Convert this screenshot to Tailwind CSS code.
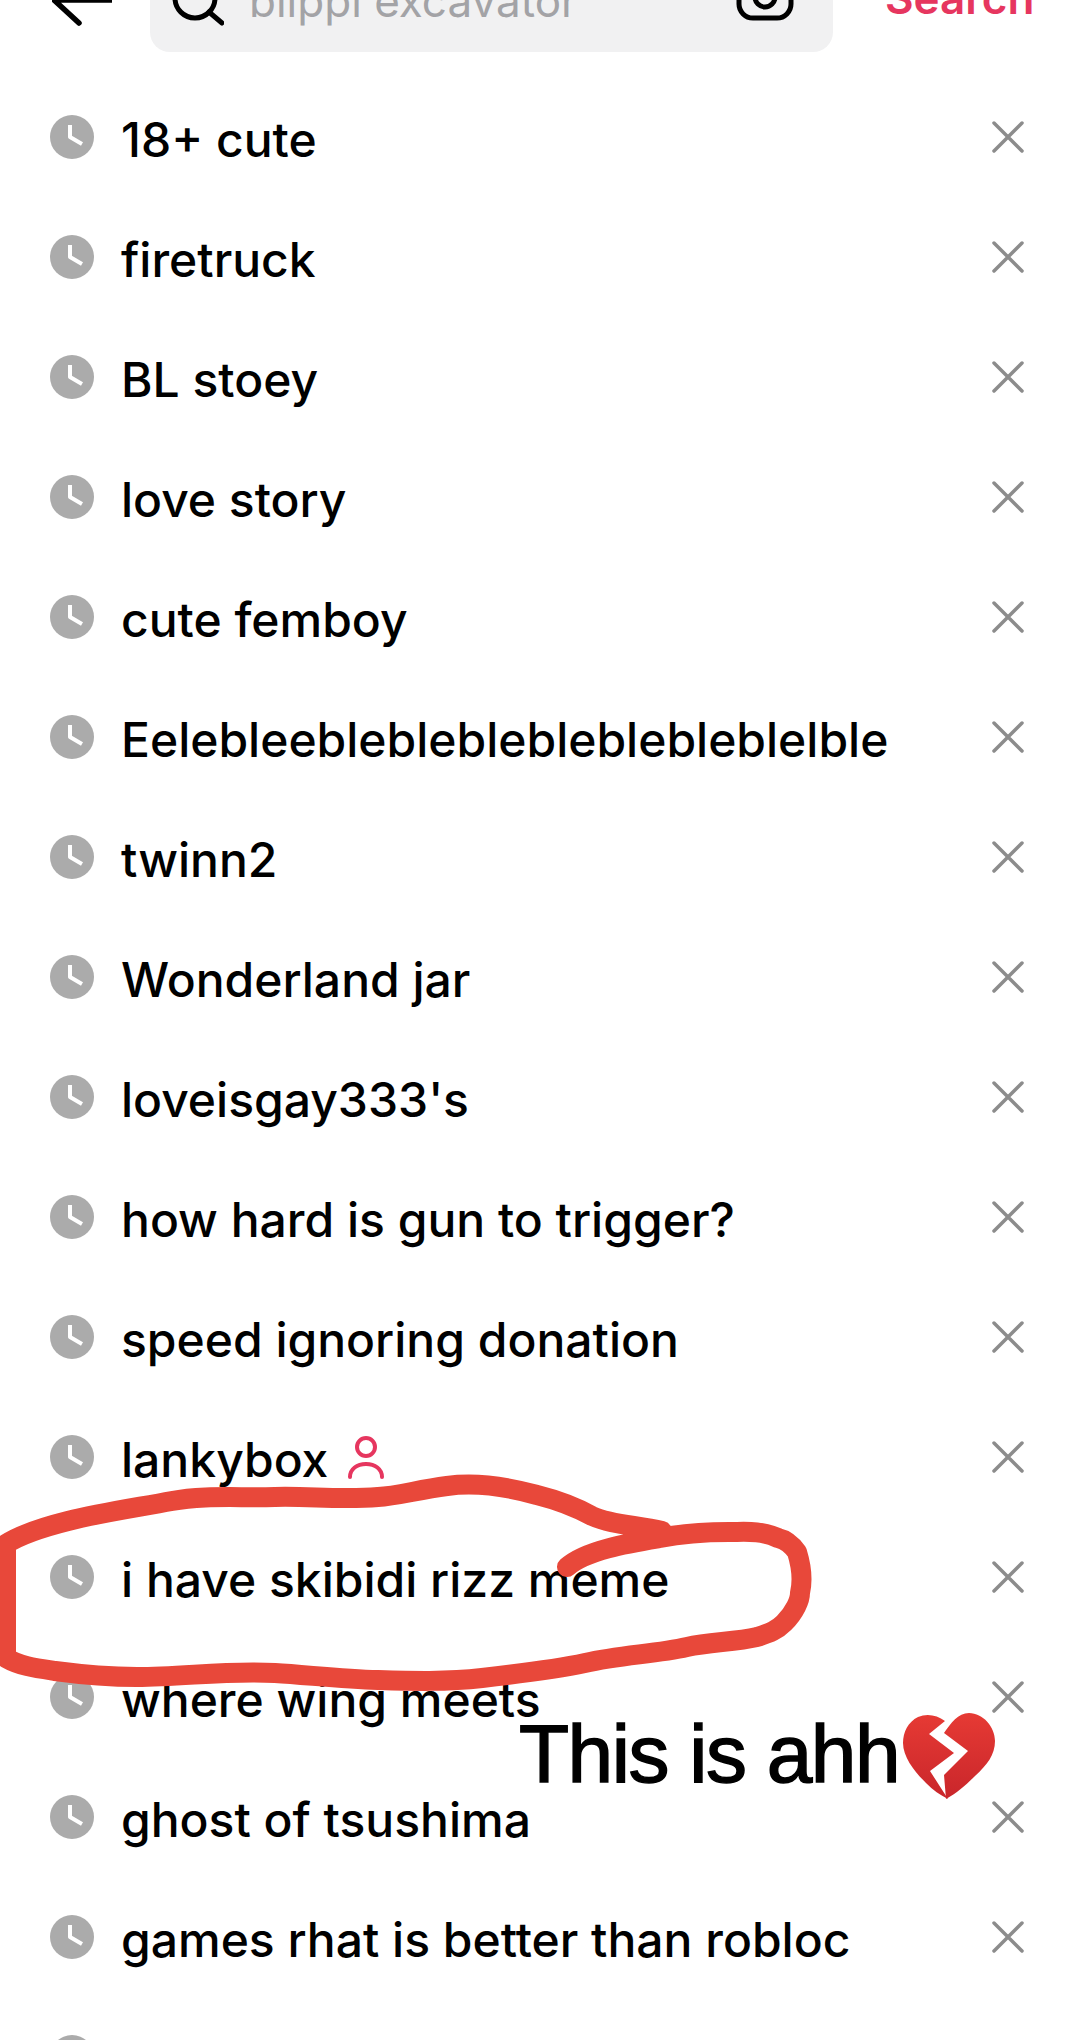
<!DOCTYPE html>
<html lang="en">
<head>
    <meta charset="UTF-8">
    <meta name="viewport" content="width=device-width, initial-scale=1.0">
    <title>Search history</title>
    <script src="https://cdn.jsdelivr.net/npm/@tailwindcss/browser@4"></script>
</head>
<body class="bg-white">
<div class="relative w-[1080px] h-[2040px] overflow-hidden bg-white font-['Inter',sans-serif]">

    <!-- header, cut off by the top of the screenshot -->
    <div class="flex items-center h-[92px] -mt-[40px] mb-[25px]">
        <svg class="ml-[52px] w-[60px] h-[60px] shrink-0" viewBox="0 0 60 60" fill="none" stroke="#000" stroke-width="5.5" stroke-linecap="round" stroke-linejoin="round">
            <path d="M60 24H2M27 -1L2 24 27 47"/>
        </svg>
        <div class="ml-[38px] w-[683px] h-[92px] shrink-0 rounded-[20px] bg-[#f1f1f2] flex items-center">
            <svg class="ml-[22px] w-[52px] h-[60px] shrink-0" viewBox="0 0 52 60" fill="none" stroke="#000" stroke-width="5" stroke-linecap="round">
                <circle cx="23" cy="22" r="20"/>
                <path d="M37 36L50 47"/>
            </svg>
            <span class="ml-[25px] mb-[10px] text-[44px] leading-none text-[#a3a3a6] w-[340px] whitespace-nowrap">blippi excavator</span>
            <svg class="ml-[147px] w-[58px] h-[58px] shrink-0" viewBox="0 0 58 58" fill="none" stroke="#000" stroke-width="5">
                <rect x="3" y="-8" width="52" height="49" rx="14"/>
                <circle cx="29" cy="20" r="10"/>
            </svg>
        </div>
        <span class="ml-[52px] mb-[16px] text-[44px] leading-none font-semibold text-[#e6365f] whitespace-nowrap">Search</span>
    </div>

    <!-- history rows -->
    <ul class="text-[48px] font-medium text-black">
        <li class="flex items-center h-[120px]"><svg class="ml-[50px] w-[44px] h-[44px]" viewBox="0 0 44 44"><circle cx="22" cy="22" r="22" fill="#ababab"/><path d="M20 10V22L32 29" fill="none" stroke="#fff" stroke-width="4" stroke-linejoin="round"/></svg><span class="ml-[27px] pt-[5px] flex-1 whitespace-nowrap">18+ cute</span><svg class="mr-[56px] w-[32px] h-[32px]" viewBox="0 0 32 32" stroke="#8c8c8c" stroke-width="3.5" stroke-linecap="round"><path d="M2 2L30 30M30 2L2 30"/></svg></li>
        <li class="flex items-center h-[120px]"><svg class="ml-[50px] w-[44px] h-[44px]" viewBox="0 0 44 44"><circle cx="22" cy="22" r="22" fill="#ababab"/><path d="M20 10V22L32 29" fill="none" stroke="#fff" stroke-width="4" stroke-linejoin="round"/></svg><span class="ml-[27px] pt-[5px] flex-1 whitespace-nowrap">firetruck</span><svg class="mr-[56px] w-[32px] h-[32px]" viewBox="0 0 32 32" stroke="#8c8c8c" stroke-width="3.5" stroke-linecap="round"><path d="M2 2L30 30M30 2L2 30"/></svg></li>
        <li class="flex items-center h-[120px]"><svg class="ml-[50px] w-[44px] h-[44px]" viewBox="0 0 44 44"><circle cx="22" cy="22" r="22" fill="#ababab"/><path d="M20 10V22L32 29" fill="none" stroke="#fff" stroke-width="4" stroke-linejoin="round"/></svg><span class="ml-[27px] pt-[5px] flex-1 whitespace-nowrap">BL stoey</span><svg class="mr-[56px] w-[32px] h-[32px]" viewBox="0 0 32 32" stroke="#8c8c8c" stroke-width="3.5" stroke-linecap="round"><path d="M2 2L30 30M30 2L2 30"/></svg></li>
        <li class="flex items-center h-[120px]"><svg class="ml-[50px] w-[44px] h-[44px]" viewBox="0 0 44 44"><circle cx="22" cy="22" r="22" fill="#ababab"/><path d="M20 10V22L32 29" fill="none" stroke="#fff" stroke-width="4" stroke-linejoin="round"/></svg><span class="ml-[27px] pt-[5px] flex-1 whitespace-nowrap">love story</span><svg class="mr-[56px] w-[32px] h-[32px]" viewBox="0 0 32 32" stroke="#8c8c8c" stroke-width="3.5" stroke-linecap="round"><path d="M2 2L30 30M30 2L2 30"/></svg></li>
        <li class="flex items-center h-[120px]"><svg class="ml-[50px] w-[44px] h-[44px]" viewBox="0 0 44 44"><circle cx="22" cy="22" r="22" fill="#ababab"/><path d="M20 10V22L32 29" fill="none" stroke="#fff" stroke-width="4" stroke-linejoin="round"/></svg><span class="ml-[27px] pt-[5px] flex-1 whitespace-nowrap">cute femboy</span><svg class="mr-[56px] w-[32px] h-[32px]" viewBox="0 0 32 32" stroke="#8c8c8c" stroke-width="3.5" stroke-linecap="round"><path d="M2 2L30 30M30 2L2 30"/></svg></li>
        <li class="flex items-center h-[120px]"><svg class="ml-[50px] w-[44px] h-[44px]" viewBox="0 0 44 44"><circle cx="22" cy="22" r="22" fill="#ababab"/><path d="M20 10V22L32 29" fill="none" stroke="#fff" stroke-width="4" stroke-linejoin="round"/></svg><span class="ml-[27px] pt-[5px] flex-1 whitespace-nowrap">Eelebleeblebleblebleblebleblelble</span><svg class="mr-[56px] w-[32px] h-[32px]" viewBox="0 0 32 32" stroke="#8c8c8c" stroke-width="3.5" stroke-linecap="round"><path d="M2 2L30 30M30 2L2 30"/></svg></li>
        <li class="flex items-center h-[120px]"><svg class="ml-[50px] w-[44px] h-[44px]" viewBox="0 0 44 44"><circle cx="22" cy="22" r="22" fill="#ababab"/><path d="M20 10V22L32 29" fill="none" stroke="#fff" stroke-width="4" stroke-linejoin="round"/></svg><span class="ml-[27px] pt-[5px] flex-1 whitespace-nowrap">twinn2</span><svg class="mr-[56px] w-[32px] h-[32px]" viewBox="0 0 32 32" stroke="#8c8c8c" stroke-width="3.5" stroke-linecap="round"><path d="M2 2L30 30M30 2L2 30"/></svg></li>
        <li class="flex items-center h-[120px]"><svg class="ml-[50px] w-[44px] h-[44px]" viewBox="0 0 44 44"><circle cx="22" cy="22" r="22" fill="#ababab"/><path d="M20 10V22L32 29" fill="none" stroke="#fff" stroke-width="4" stroke-linejoin="round"/></svg><span class="ml-[27px] pt-[5px] flex-1 whitespace-nowrap">Wonderland jar</span><svg class="mr-[56px] w-[32px] h-[32px]" viewBox="0 0 32 32" stroke="#8c8c8c" stroke-width="3.5" stroke-linecap="round"><path d="M2 2L30 30M30 2L2 30"/></svg></li>
        <li class="flex items-center h-[120px]"><svg class="ml-[50px] w-[44px] h-[44px]" viewBox="0 0 44 44"><circle cx="22" cy="22" r="22" fill="#ababab"/><path d="M20 10V22L32 29" fill="none" stroke="#fff" stroke-width="4" stroke-linejoin="round"/></svg><span class="ml-[27px] pt-[5px] flex-1 whitespace-nowrap">loveisgay333's</span><svg class="mr-[56px] w-[32px] h-[32px]" viewBox="0 0 32 32" stroke="#8c8c8c" stroke-width="3.5" stroke-linecap="round"><path d="M2 2L30 30M30 2L2 30"/></svg></li>
        <li class="flex items-center h-[120px]"><svg class="ml-[50px] w-[44px] h-[44px]" viewBox="0 0 44 44"><circle cx="22" cy="22" r="22" fill="#ababab"/><path d="M20 10V22L32 29" fill="none" stroke="#fff" stroke-width="4" stroke-linejoin="round"/></svg><span class="ml-[27px] pt-[5px] flex-1 whitespace-nowrap">how hard is gun to trigger?</span><svg class="mr-[56px] w-[32px] h-[32px]" viewBox="0 0 32 32" stroke="#8c8c8c" stroke-width="3.5" stroke-linecap="round"><path d="M2 2L30 30M30 2L2 30"/></svg></li>
        <li class="flex items-center h-[120px]"><svg class="ml-[50px] w-[44px] h-[44px]" viewBox="0 0 44 44"><circle cx="22" cy="22" r="22" fill="#ababab"/><path d="M20 10V22L32 29" fill="none" stroke="#fff" stroke-width="4" stroke-linejoin="round"/></svg><span class="ml-[27px] pt-[5px] flex-1 whitespace-nowrap">speed ignoring donation</span><svg class="mr-[56px] w-[32px] h-[32px]" viewBox="0 0 32 32" stroke="#8c8c8c" stroke-width="3.5" stroke-linecap="round"><path d="M2 2L30 30M30 2L2 30"/></svg></li>
        <li class="flex items-center h-[120px]"><svg class="ml-[50px] w-[44px] h-[44px]" viewBox="0 0 44 44"><circle cx="22" cy="22" r="22" fill="#ababab"/><path d="M20 10V22L32 29" fill="none" stroke="#fff" stroke-width="4" stroke-linejoin="round"/></svg><span class="ml-[27px] pt-[5px] flex-1 flex items-center whitespace-nowrap">lankybox<svg class="ml-[19px] -mt-[5px] w-[38px] h-[44px]" viewBox="0 0 38 44" fill="none" stroke="#e6365f" stroke-width="4" stroke-linecap="round"><circle cx="19" cy="12" r="9"/><path d="M3 42C3 34 10 29 19 29S35 34 35 42"/></svg></span><svg class="mr-[56px] w-[32px] h-[32px]" viewBox="0 0 32 32" stroke="#8c8c8c" stroke-width="3.5" stroke-linecap="round"><path d="M2 2L30 30M30 2L2 30"/></svg></li>
        <li class="flex items-center h-[120px]"><svg class="ml-[50px] w-[44px] h-[44px]" viewBox="0 0 44 44"><circle cx="22" cy="22" r="22" fill="#ababab"/><path d="M20 10V22L32 29" fill="none" stroke="#fff" stroke-width="4" stroke-linejoin="round"/></svg><span class="ml-[27px] pt-[5px] flex-1 whitespace-nowrap">i have skibidi rizz meme</span><svg class="mr-[56px] w-[32px] h-[32px]" viewBox="0 0 32 32" stroke="#8c8c8c" stroke-width="3.5" stroke-linecap="round"><path d="M2 2L30 30M30 2L2 30"/></svg></li>
        <li class="flex items-center h-[120px]"><svg class="ml-[50px] w-[44px] h-[44px]" viewBox="0 0 44 44"><circle cx="22" cy="22" r="22" fill="#ababab"/><path d="M20 10V22L32 29" fill="none" stroke="#fff" stroke-width="4" stroke-linejoin="round"/></svg><span class="ml-[27px] pt-[5px] flex-1 whitespace-nowrap">where wing meets</span><svg class="mr-[56px] w-[32px] h-[32px]" viewBox="0 0 32 32" stroke="#8c8c8c" stroke-width="3.5" stroke-linecap="round"><path d="M2 2L30 30M30 2L2 30"/></svg></li>
        <li class="flex items-center h-[120px]"><svg class="ml-[50px] w-[44px] h-[44px]" viewBox="0 0 44 44"><circle cx="22" cy="22" r="22" fill="#ababab"/><path d="M20 10V22L32 29" fill="none" stroke="#fff" stroke-width="4" stroke-linejoin="round"/></svg><span class="ml-[27px] pt-[5px] flex-1 whitespace-nowrap">ghost of tsushima</span><svg class="mr-[56px] w-[32px] h-[32px]" viewBox="0 0 32 32" stroke="#8c8c8c" stroke-width="3.5" stroke-linecap="round"><path d="M2 2L30 30M30 2L2 30"/></svg></li>
        <li class="flex items-center h-[120px]"><svg class="ml-[50px] w-[44px] h-[44px]" viewBox="0 0 44 44"><circle cx="22" cy="22" r="22" fill="#ababab"/><path d="M20 10V22L32 29" fill="none" stroke="#fff" stroke-width="4" stroke-linejoin="round"/></svg><span class="ml-[27px] pt-[5px] flex-1 whitespace-nowrap">games rhat is better than robloc</span><svg class="mr-[56px] w-[32px] h-[32px]" viewBox="0 0 32 32" stroke="#8c8c8c" stroke-width="3.5" stroke-linecap="round"><path d="M2 2L30 30M30 2L2 30"/></svg></li>
        <li class="flex items-center h-[120px]"><svg class="ml-[50px] w-[44px] h-[44px]" viewBox="0 0 44 44"><circle cx="22" cy="22" r="22" fill="#ababab"/></svg></li>
    </ul>

    <!-- red marker scribble drawn over the screenshot -->
    <svg class="absolute left-0 top-0 w-[1080px] h-[2040px] pointer-events-none" viewBox="0 0 1080 2040" fill="none" stroke="#e8483a" stroke-width="20" stroke-linecap="round" stroke-linejoin="round">
        <path d="M662 1531C637 1525 612 1525 592 1516C572 1505 557 1500 537 1495C512 1488 477 1482 447 1486C417 1490 397 1496 378 1497C342 1500 308 1496 275 1497C238 1498 203 1495 172 1501C134 1508 99 1513 68 1521C44 1527 20 1535 6 1544C6 1580 6 1620 6 1658C20 1666 35 1668 55 1671C85 1675 110 1677 137 1677C184 1677 228 1670 275 1673C308 1675 342 1679 378 1680C412 1681 447 1682 482 1678C517 1674 552 1670 585 1663C621 1655 656 1654 687 1647C710 1642 735 1642 757 1637C770 1633 777 1630 784 1623C795 1612 800 1600 800 1593C803 1580 801 1565 797 1552C792 1545 787 1540 778 1538C760 1530 745 1532 729 1532C705 1532 685 1533 660 1538C630 1543 586 1550 567 1567"/>
    </svg>

    <!-- caption sticker -->
    <p class="absolute left-[519px] top-[1708px] font-['Liberation_Sans',sans-serif] text-[82px] leading-[92px] tracking-[-1.5px] [-webkit-text-stroke:1.5px_black] text-black whitespace-nowrap">This is ahh</p>
    <svg class="absolute left-[903px] top-[1713px] w-[92px] h-[87px]" viewBox="0 0 92 87">
        <defs>
            <linearGradient id="heartFill" x1="0" y1="0" x2="0" y2="1">
                <stop offset="0" stop-color="#e63a34"/>
                <stop offset="1" stop-color="#c9262b"/>
            </linearGradient>
        </defs>
        <path d="M42 8C34 2 24 0 15 4C5 9 0 19 0 30C0 45 13 60 23 70C30 77 37 82 45 86L27 58L51 40L26 21Z" fill="url(#heartFill)"/>
        <path d="M41 20C48 10 55 0 66 0C80 0 92 14 92 28C92 42 84 52 72 63C64 71 54 80 43 86L41 62L65 38Z" fill="url(#heartFill)"/>
    </svg>
</div>
</body>
</html>
